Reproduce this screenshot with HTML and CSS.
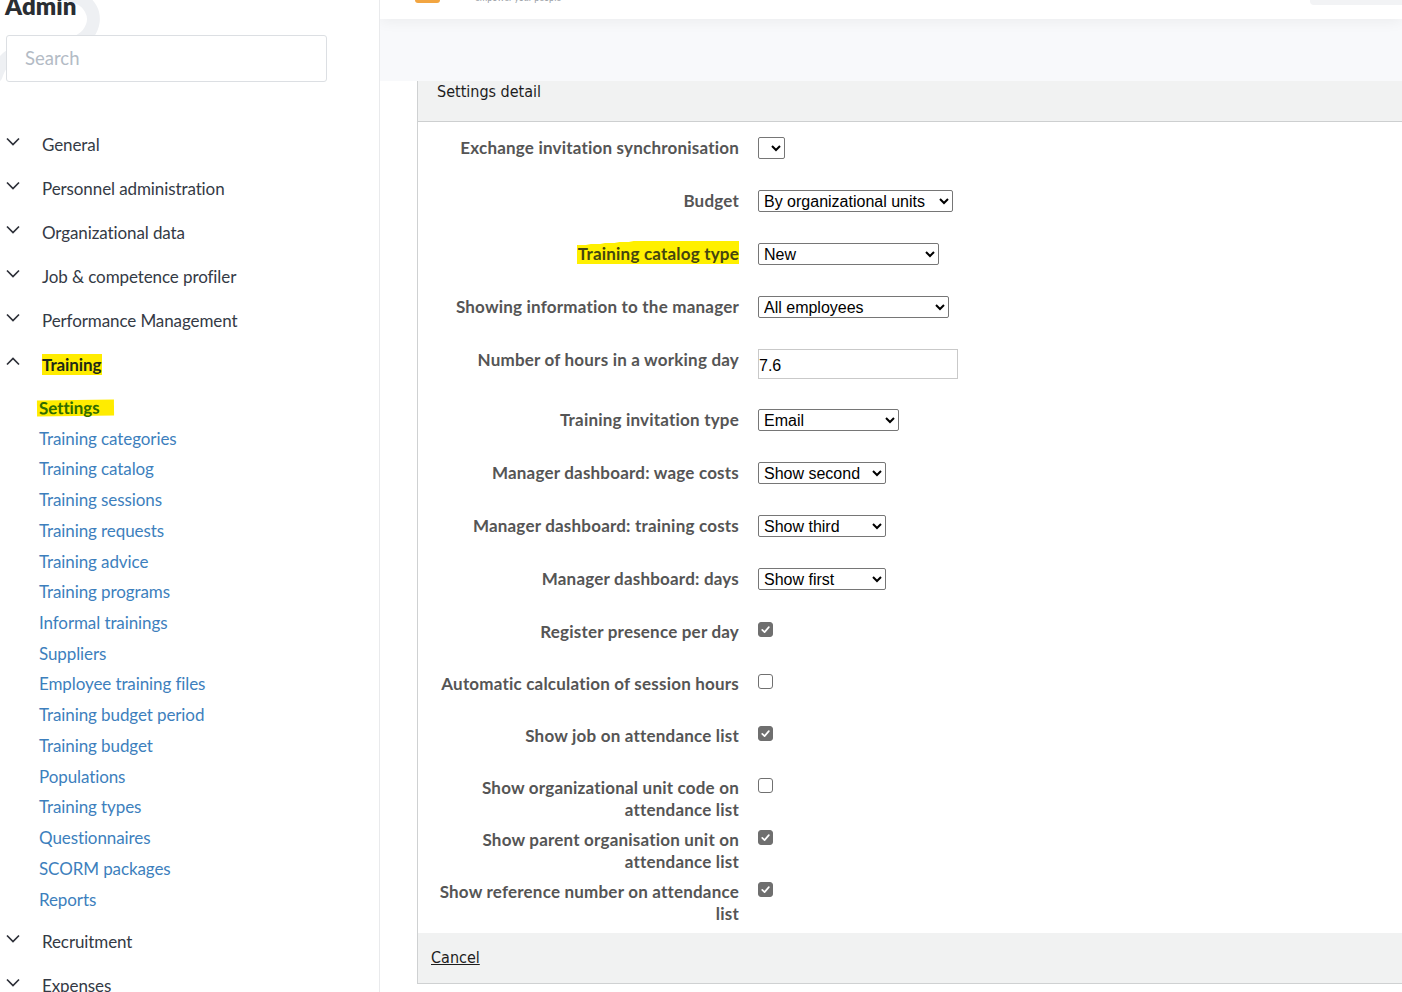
FILE: index.html
```html
<!DOCTYPE html>
<html lang="en">
<head>
<meta charset="utf-8">
<title>Admin – Training settings</title>
<link rel="stylesheet" href="styles.css">
</head>
<body>
<div class="app">
  <aside class="sidebar">
    <svg class="swirl" width="120" height="90" viewBox="0 0 120 90" aria-hidden="true">
      <path d="M62 -6 C92 -4 100 18 88 34 C76 50 40 46 18 52 C6 56 0 64 -4 76" fill="none" stroke="#eef0f3" stroke-width="13" stroke-linecap="round"/>
    </svg>
    <h1 class="brand-title">Admin</h1>
    <input class="search" type="text" placeholder="Search">
    <nav class="nav">
      <div class="nav-group">
        <div class="nav-head"><svg class="chev" viewBox="0 0 14 9"><polyline points="1,1.5 7,7.5 13,1.5"/></svg><span>General</span></div>
      </div>
      <div class="nav-group">
        <div class="nav-head"><svg class="chev" viewBox="0 0 14 9"><polyline points="1,1.5 7,7.5 13,1.5"/></svg><span>Personnel administration</span></div>
      </div>
      <div class="nav-group">
        <div class="nav-head"><svg class="chev" viewBox="0 0 14 9"><polyline points="1,1.5 7,7.5 13,1.5"/></svg><span>Organizational data</span></div>
      </div>
      <div class="nav-group">
        <div class="nav-head"><svg class="chev" viewBox="0 0 14 9"><polyline points="1,1.5 7,7.5 13,1.5"/></svg><span>Job &amp; competence profiler</span></div>
      </div>
      <div class="nav-group">
        <div class="nav-head"><svg class="chev" viewBox="0 0 14 9"><polyline points="1,1.5 7,7.5 13,1.5"/></svg><span>Performance Management</span></div>
      </div>
      <div class="nav-group open">
        <div class="nav-head"><svg class="chev" viewBox="0 0 14 9"><polyline points="1,7.5 7,1.5 13,7.5"/></svg><span class="marked marked-head">Training</span></div>
        <ul class="sub">
          <li class="sub-item active"><span class="marked marked-sub">Settings</span></li>
          <li class="sub-item">Training categories</li>
          <li class="sub-item">Training catalog</li>
          <li class="sub-item">Training sessions</li>
          <li class="sub-item">Training requests</li>
          <li class="sub-item">Training advice</li>
          <li class="sub-item">Training programs</li>
          <li class="sub-item">Informal trainings</li>
          <li class="sub-item">Suppliers</li>
          <li class="sub-item">Employee training files</li>
          <li class="sub-item">Training budget period</li>
          <li class="sub-item">Training budget</li>
          <li class="sub-item">Populations</li>
          <li class="sub-item">Training types</li>
          <li class="sub-item">Questionnaires</li>
          <li class="sub-item">SCORM packages</li>
          <li class="sub-item">Reports</li>
        </ul>
      </div>
      <div class="nav-group">
        <div class="nav-head"><svg class="chev" viewBox="0 0 14 9"><polyline points="1,1.5 7,7.5 13,1.5"/></svg><span>Recruitment</span></div>
      </div>
      <div class="nav-group">
        <div class="nav-head"><svg class="chev" viewBox="0 0 14 9"><polyline points="1,1.5 7,7.5 13,1.5"/></svg><span>Expenses</span></div>
      </div>
    </nav>
  </aside>

  <main class="main">
    <header class="topbar">
      <div class="logo-mark"></div>
      <div class="tagline">empower your people</div>
      <div class="top-tool"></div>
    </header>
    <div class="strip"></div>

    <div class="content">
      <section class="panel">
        <div class="panel-head">Settings detail</div>
        <div class="panel-body">
          <div class="row">
            <label class="lbl">Exchange invitation synchronisation</label>
            <select class="sel w-empty"><option></option></select>
          </div>
          <div class="row">
            <label class="lbl">Budget</label>
            <select class="sel w-195"><option>By organizational units</option></select>
          </div>
          <div class="row">
            <label class="lbl"><span class="hl-label">Training catalog type</span></label>
            <select class="sel w-181"><option>New</option></select>
          </div>
          <div class="row">
            <label class="lbl">Showing information to the manager</label>
            <select class="sel w-191"><option>All employees</option></select>
          </div>
          <div class="row row-input">
            <label class="lbl">Number of hours in a working day</label>
            <input class="txt" type="text" value="7.6">
          </div>
          <div class="row">
            <label class="lbl">Training invitation type</label>
            <select class="sel w-141"><option>Email</option></select>
          </div>
          <div class="row">
            <label class="lbl">Manager dashboard: wage costs</label>
            <select class="sel w-128"><option>Show second</option></select>
          </div>
          <div class="row">
            <label class="lbl">Manager dashboard: training costs</label>
            <select class="sel w-128"><option>Show third</option></select>
          </div>
          <div class="row">
            <label class="lbl">Manager dashboard: days</label>
            <select class="sel w-128"><option>Show first</option></select>
          </div>
          <div class="row row-check">
            <label class="lbl">Register presence per day</label>
            <span class="check on"><svg viewBox="0 0 14 14"><polyline points="3.5,7.4 6,9.8 10.6,4.4"/></svg></span>
          </div>
          <div class="row row-check">
            <label class="lbl">Automatic calculation of session hours</label>
            <span class="check"></span>
          </div>
          <div class="row row-check">
            <label class="lbl">Show job on attendance list</label>
            <span class="check on"><svg viewBox="0 0 14 14"><polyline points="3.5,7.4 6,9.8 10.6,4.4"/></svg></span>
          </div>
          <div class="row row-check">
            <label class="lbl">Show organizational unit code on attendance list</label>
            <span class="check"></span>
          </div>
          <div class="row row-check">
            <label class="lbl">Show parent organisation unit on attendance list</label>
            <span class="check on"><svg viewBox="0 0 14 14"><polyline points="3.5,7.4 6,9.8 10.6,4.4"/></svg></span>
          </div>
          <div class="row row-check">
            <label class="lbl">Show reference number on attendance list</label>
            <span class="check on"><svg viewBox="0 0 14 14"><polyline points="3.5,7.4 6,9.8 10.6,4.4"/></svg></span>
          </div>
        </div>
        <div class="panel-foot"><a class="cancel" href="#">Cancel</a></div>
      </section>
    </div>
  </main>
</div>
</body>
</html>
```

FILE: styles.css
```css
html, body {
  margin: 0;
  padding: 0;
  background: #fff;
  height: 100%;
  overflow: hidden;
}

body {
  font-family: Lato, "Noto Sans", sans-serif;
  color: #333;
}

.app {
  display: flex;
  height: 992px;
}

/* ---------- sidebar ---------- */
.sidebar {
  position: relative;
  width: 379px;
  flex: 0 0 379px;
  border-right: 1px solid #e9eaec;
  box-sizing: content-box;
  overflow: hidden;
}

.swirl {
  position: absolute;
  left: 0;
  top: 0;
  z-index: 0;
}

.brand-title {
  position: relative;
  z-index: 1;
  margin: -8px 0 0 5px;
  height: 43px;
  font-size: 24px;
  line-height: 28px;
  font-weight: 800;
  color: #2a2e33;
  letter-spacing: 0.1px;
}

.search {
  position: relative;
  z-index: 1;
  display: block;
  box-sizing: border-box;
  margin: 0 0 0 6px;
  width: 321px;
  height: 47px;
  border: 1px solid #dcdfe3;
  border-radius: 3px;
  padding: 0 0 2px 18px;
  font-family: Lato, sans-serif;
  font-size: 18.5px;
  color: #333;
  background: #fff;
  outline: none;
}

.search::placeholder {
  color: #b3bbc5;
}

.nav {
  margin-top: 40px;
}

.nav-head {
  display: flex;
  align-items: center;
  height: 44px;
  font-size: 17px;
  letter-spacing: -0.1px;
  color: #343a45;
}

.nav-head span {
  margin-top: 1px;
}

.chev {
  width: 14px;
  height: 9px;
  margin: -6px 22px 0 6px;
  flex: none;
}

.chev polyline {
  fill: none;
  stroke: #2d3038;
  stroke-width: 1.7;
}

.marked {
  font-weight: 700;
  background: #ffec00;
}

.nav-head .marked-head {
  color: #1e2a17;
  padding: 0 1px 0 0;
  margin-top: 0;
}

.sub {
  list-style: none;
  margin: 0;
  padding: 7px 0 4px 39px;
}

.sub-item {
  height: 30.73px;
  line-height: 30.73px;
  font-size: 17px;
  letter-spacing: -0.1px;
  color: #3d7fbd;
}

.marked-sub {
  color: #2f6b00;
  margin-left: -2px;
  padding: 0 14px 0 2px;
  display: inline-block;
  line-height: 16px;
  transform: rotate(-0.6deg);
}

/* ---------- main ---------- */
.main {
  flex: 1;
  min-width: 0;
  display: flex;
  flex-direction: column;
  overflow: hidden;
}

.topbar {
  position: relative;
  z-index: 2;
  display: flex;
  align-items: flex-start;
  height: 19px;
  flex: none;
  background: #fff;
  box-shadow: 0 3px 14px rgba(0, 0, 0, 0.05);
}

.logo-mark {
  width: 25px;
  height: 3px;
  margin-left: 35px;
  background: #f2a541;
  border-radius: 0 0 3px 3px;
}

.tagline {
  margin: -8px 0 0 35px;
  font-size: 9px;
  line-height: 11px;
  color: #9aa0a6;
}

.top-tool {
  margin-left: auto;
  width: 92px;
  height: 5px;
  background: #f2f3f5;
  border-radius: 0 0 0 4px;
}

.strip {
  height: 62px;
  flex: none;
  background: #f8f9fb;
}

.content {
  padding-left: 37px;
}

.panel {
  width: 1040px;
  border-left: 1px solid #cfd1d2;
  border-bottom: 1px solid #cfd1d2;
}

.panel-head {
  height: 41px;
  box-sizing: border-box;
  padding: 0 0 0 19px;
  background: #f1f2f2;
  border-bottom: 1px solid #cdcfd0;
  font-family: "Liberation Sans Narrow", "DejaVu Sans Condensed", sans-serif;
  font-size: 16px;
  line-height: 21px;
  color: #1d1d1d;
}

.panel-body {
  padding-top: 15px;
  background: #fff;
}

.row {
  display: flex;
  align-items: flex-start;
  height: 53px;
}

.row-input {
  height: 60px;
}

.row-check {
  height: 52px;
}

.lbl {
  width: 302px;
  flex: none;
  margin: 0 19px 0 19px;
  text-align: right;
  font-size: 17px;
  letter-spacing: 0.2px;
  line-height: 22px;
  font-weight: 700;
  color: #555;
}

.hl-label {
  color: #45450f;
  background: linear-gradient(176deg, transparent 0 12%, #fff000 13% 100%);
  padding: 2px 0 0 1px;
}

.sel {
  height: 22px;
  box-sizing: border-box;
  border: 1px solid #767676;
  border-radius: 2px;
  background: #fff;
  color: #000;
  font-family: "Liberation Sans", Arial, sans-serif;
  font-size: 16px;
  padding: 0 0 0 1px;
}

.w-empty { width: 27px; }
.w-195 { width: 195px; }
.w-181 { width: 181px; }
.w-191 { width: 191px; }
.w-141 { width: 141px; }
.w-128 { width: 128px; }

.txt {
  box-sizing: border-box;
  width: 200px;
  height: 30px;
  border: 1px solid #c9c9c9;
  padding: 4px 1px 0 0;
  font-family: "Liberation Sans", Arial, sans-serif;
  font-size: 16px;
  color: #000;
  outline: none;
}

.check {
  width: 15px;
  height: 15px;
  margin-top: 1px;
  box-sizing: border-box;
  border: 1px solid #707070;
  border-radius: 3px;
  background: #fff;
  display: block;
}

.check.on {
  background: #6f6f6f;
  border-color: #6f6f6f;
}

.check svg {
  display: block;
  width: 13px;
  height: 13px;
}

.check polyline {
  fill: none;
  stroke: #fff;
  stroke-width: 1.8;
  stroke-linecap: round;
  stroke-linejoin: round;
}

.panel-foot {
  height: 50px;
  box-sizing: border-box;
  padding: 14px 0 0 13px;
  background: #f1f2f2;
  font-family: "Liberation Sans Narrow", "DejaVu Sans Condensed", sans-serif;
  font-size: 16px;
  line-height: 21px;
}

.cancel {
  color: #1d1d1d;
  text-decoration: underline;
}
```
